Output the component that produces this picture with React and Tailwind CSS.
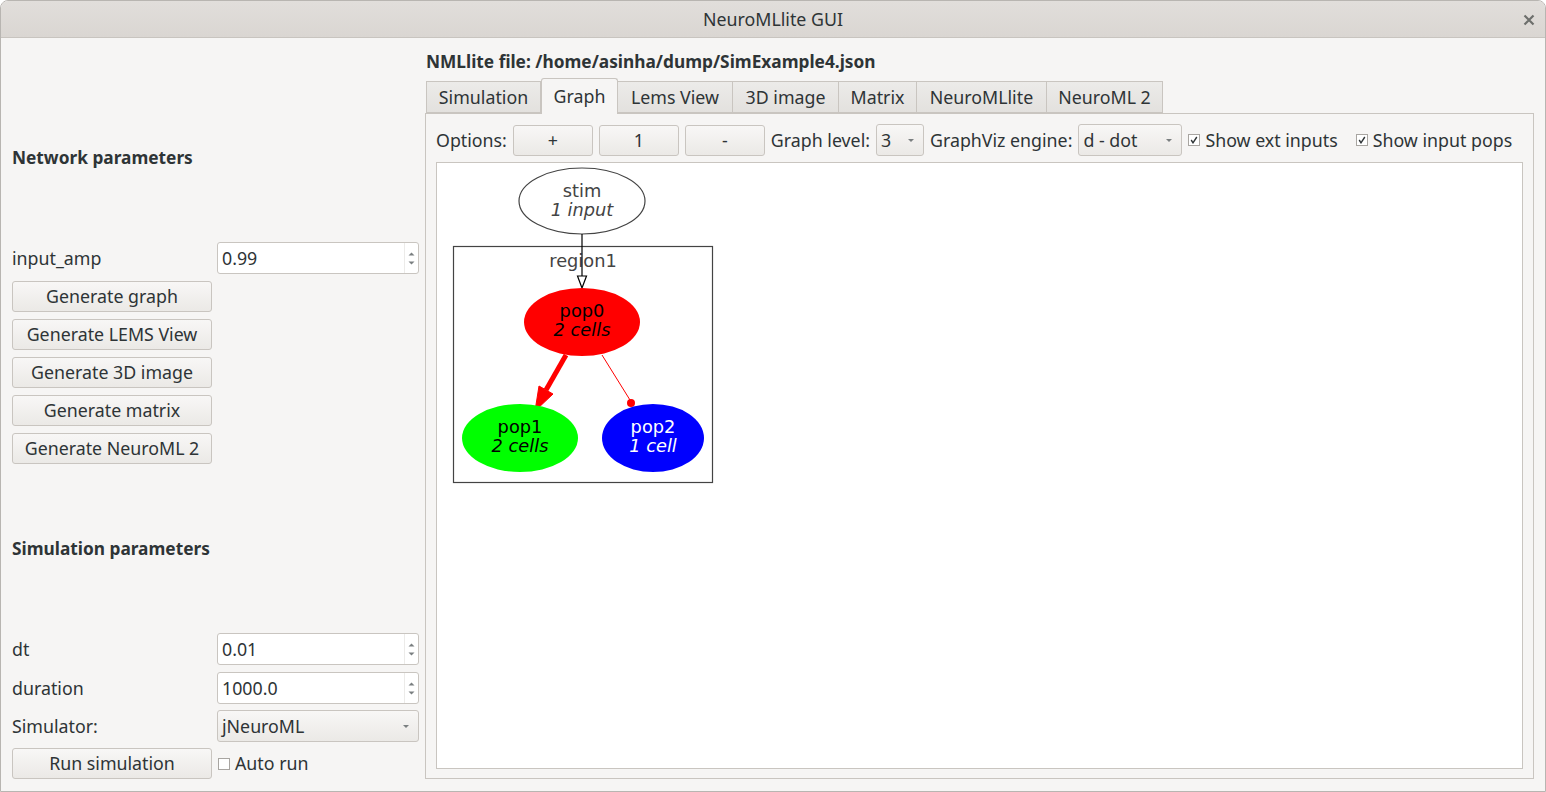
import React from "react";

const font = { fontFamily: '"Noto Sans", "DejaVu Sans", sans-serif' };

// 버튼 (Qt/GTK 스타일)
function Btn({ children, className = "" }) {
  return (
    <div
      className={`flex items-center justify-center h-[31px] rounded-[3px] border border-[#c9c5c0] bg-gradient-to-b from-[#f8f7f6] to-[#ebe9e6] text-[17.8px] text-[#2e3436] ${className}`}
    >
      {children}
    </div>
  );
}

function Arrow() {
  return (
    <svg width="8" height="5" viewBox="0 0 8 5" className="shrink-0">
      <path d="M1 1 L4 4 L7 1 Z" fill="#7a7f80" />
    </svg>
  );
}

function SpinBox({ value }) {
  return (
    <div className="flex items-stretch h-[32px] w-[202px] rounded-[3px] border border-[#c9c5c0] bg-white text-[17.8px] text-[#2e3436]">
      <span className="flex-1 flex items-center pl-[4px]">{value}</span>
      {/* 증감 화살표 */}
      <div className="w-[14px] flex flex-col gap-[5px] items-center justify-center border-l border-[#ecebe9]">
        <svg width="7" height="4" viewBox="0 0 7 4">
          <path d="M0.5 3.5 L3.5 0.5 L6.5 3.5 Z" fill="#7a7f80" />
        </svg>
        <svg width="7" height="4" viewBox="0 0 7 4">
          <path d="M0.5 0.5 L3.5 3.5 L6.5 0.5 Z" fill="#7a7f80" />
        </svg>
      </div>
    </div>
  );
}

function Combo({ value, className = "" }) {
  return (
    <div
      className={`flex items-center h-[32px] rounded-[3px] border border-[#c9c5c0] bg-gradient-to-b from-[#f8f7f6] to-[#ebe9e6] pl-[4px] pr-[8px] text-[17.8px] text-[#2e3436] ${className}`}
    >
      <span className="flex-1">{value}</span>
      <Arrow />
    </div>
  );
}

function Check({ checked, label }) {
  return (
    <div className="flex items-center gap-[5px] text-[17.8px] text-[#2e3436]">
      <div className="w-[12px] h-[12px] border border-[#a8a5a1] bg-white flex items-center justify-center">
        {checked && (
          <svg width="8" height="8" viewBox="0 0 8 8">
            <path d="M1.2 4 L3 6.8 L6.8 1" stroke="#2e3436" strokeWidth="1.4" fill="none" />
          </svg>
        )}
      </div>
      <span>{label}</span>
    </div>
  );
}

const tabs = [
  ["Simulation", "w-[115px]"],
  ["Graph", "w-[77px]"],
  ["Lems View", "w-[115px]"],
  ["3D image", "w-[106px]"],
  ["Matrix", "w-[78px]"],
  ["NeuroMLlite", "w-[130px]"],
  ["NeuroML 2", "w-[116px]"],
];

function Graph() {
  const gf = { fontFamily: '"DejaVu Sans", sans-serif' };
  return (
    <svg width="300" height="330" viewBox="437 163 300 330" className="absolute left-0 top-0">
      <ellipse cx="582" cy="201" rx="63" ry="33" fill="white" stroke="#444" strokeWidth="1.2" />
      <text x="582" y="197" textAnchor="middle" fontSize="17.8" fill="#444" style={gf}>stim</text>
      <text x="582" y="216" textAnchor="middle" fontSize="17.8" fontStyle="italic" fill="#444" style={gf}>1 input</text>

      <rect x="453.5" y="246.5" width="259" height="236" fill="none" stroke="#444" strokeWidth="1.2" />
      <text x="583" y="267" textAnchor="middle" fontSize="17.8" fill="#444" style={gf}>region1</text>

      <line x1="582" y1="234" x2="582" y2="276" stroke="black" strokeWidth="1.2" />
      <path d="M577.5 276 L586.5 276 L582 288 Z" fill="white" stroke="black" strokeWidth="1.2" />

      <ellipse cx="582" cy="322" rx="58" ry="34" fill="#ff0000" />
      <text x="582" y="317" textAnchor="middle" fontSize="17.8" fill="black" style={gf}>pop0</text>
      <text x="582" y="336" textAnchor="middle" fontSize="17.8" fontStyle="italic" fill="black" style={gf}>2 cells</text>

      <line x1="566" y1="355" x2="546" y2="390" stroke="#ff0000" strokeWidth="5" />
      <path d="M539 386 L553 394 L535 411 Z" fill="#ff0000" stroke="#ff0000" strokeWidth="1" />

      <line x1="602" y1="355" x2="630" y2="400" stroke="#ff0000" strokeWidth="1" />
      <circle cx="631" cy="403" r="4" fill="#ff0000" />

      <ellipse cx="520" cy="438" rx="58" ry="34" fill="#00ff00" />
      <text x="520" y="433" textAnchor="middle" fontSize="17.8" fill="black" style={gf}>pop1</text>
      <text x="520" y="452" textAnchor="middle" fontSize="17.8" fontStyle="italic" fill="black" style={gf}>2 cells</text>

      <ellipse cx="653" cy="438" rx="51" ry="34" fill="#0000ff" />
      <text x="653" y="433" textAnchor="middle" fontSize="17.8" fill="white" style={gf}>pop2</text>
      <text x="653" y="452" textAnchor="middle" fontSize="17.8" fontStyle="italic" fill="white" style={gf}>1 cell</text>
    </svg>
  );
}

export default function App() {
  return (
    <div className="w-[1546px] h-[792px] bg-white" style={font}>
      <div className="w-full h-full flex flex-col rounded-t-[8px] border border-[#b8b5b1] overflow-hidden bg-[#f6f5f4]">
        {/* 타이틀 바 */}
        <div className="relative h-[37px] shrink-0 flex items-center justify-center bg-gradient-to-b from-[#e1dedb] to-[#dad6d2] border-b border-[#c8c4bf] text-[17.8px] text-[#2e3436]">
          NeuroMLlite GUI
          <svg width="12" height="12" viewBox="0 0 12 12" className="absolute right-[10px] top-[13px]">
            <path d="M1.5 1.5 L10.5 10.5 M10.5 1.5 L1.5 10.5" stroke="#6d6f6c" strokeWidth="2.2" />
          </svg>
        </div>

        <div className="flex-1 flex">
          {/* 왼쪽 패널 */}
          <div className="w-[424px] shrink-0 flex flex-col pl-[11px] pr-[6px] text-[17.8px] text-[#2e3436]">
            <div className="h-[108px] shrink-0" />
            <div className="font-bold text-[17.3px] h-[24px] flex items-center">Network parameters</div>
            <div className="h-[72px] shrink-0" />
            <div className="flex items-center justify-between h-[32px]">
              <span>input_amp</span>
              <SpinBox value="0.99" />
            </div>
            <div className="flex flex-col gap-[7px] mt-[7px]">
              <Btn className="w-[200px]">Generate graph</Btn>
              <Btn className="w-[200px]">Generate LEMS View</Btn>
              <Btn className="w-[200px]">Generate 3D image</Btn>
              <Btn className="w-[200px]">Generate matrix</Btn>
              <Btn className="w-[200px]">Generate NeuroML 2</Btn>
            </div>
            <div className="h-[73px] shrink-0" />
            <div className="font-bold text-[17.3px] h-[24px] flex items-center">Simulation parameters</div>
            <div className="h-[72px] shrink-0" />
            <div className="flex flex-col">
              <div className="flex items-center justify-between h-[32px]">
                <span>dt</span>
                <SpinBox value="0.01" />
              </div>
              <div className="flex items-center justify-between h-[32px] mt-[7px]">
                <span>duration</span>
                <SpinBox value="1000.0" />
              </div>
              <div className="flex items-center justify-between h-[32px] mt-[6px]">
                <span>Simulator:</span>
                <Combo value="jNeuroML" className="w-[202px]" />
              </div>
              <div className="flex items-center gap-[6px] mt-[6px]">
                <Btn className="w-[200px]">Run simulation</Btn>
                <Check label="Auto run" />
              </div>
            </div>
          </div>

          {/* 오른쪽 패널 */}
          <div className="flex-1 flex flex-col pr-[11px] pb-[12px] text-[17.8px] text-[#2e3436]">
            <div className="font-bold text-[17.3px] h-[24px] mt-[12px] ml-[1px] flex items-center">
              NMLlite file: /home/asinha/dump/SimExample4.json
            </div>
            <div className="flex items-end h-[39px] ml-[1px] relative z-10">
              {tabs.map(([name, w]) =>
                name === "Graph" ? (
                  <div
                    key={name}
                    className={`${w} h-[36px] -mb-px flex items-center justify-center border border-b-0 border-[#c9c5c0] rounded-t-[3px] bg-[#f6f5f4]`}
                  >
                    {name}
                  </div>
                ) : (
                  <div
                    key={name}
                    className={`${w} h-[32px] flex items-center justify-center border border-l-0 first:border-l border-[#c9c5c0] bg-gradient-to-b from-[#ecebe9] to-[#e3e1de]`}
                  >
                    {name}
                  </div>
                )
              )}
            </div>
            <div className="flex-1 flex flex-col border border-[#c9c5c0] px-[10px] pt-[10px] pb-[9px]">
              <div className="flex items-center gap-[6px] h-[32px]">
                <span>Options:</span>
                <Btn className="w-[80px]">+</Btn>
                <Btn className="w-[80px]">1</Btn>
                <Btn className="w-[80px]">-</Btn>
                <span>Graph level:</span>
                <Combo value="3" className="w-[48px]" />
                <span>GraphViz engine:</span>
                <Combo value="d - dot" className="w-[104px]" />
                <Check checked label="Show ext inputs" />
                <div className="w-[6px]" />
                <Check checked label="Show input pops" />
              </div>
              <div className="flex-1 relative mt-[6px] bg-white border border-[#c9c5c0]">
                <Graph />
              </div>
            </div>
          </div>
        </div>
      </div>
    </div>
  );
}
